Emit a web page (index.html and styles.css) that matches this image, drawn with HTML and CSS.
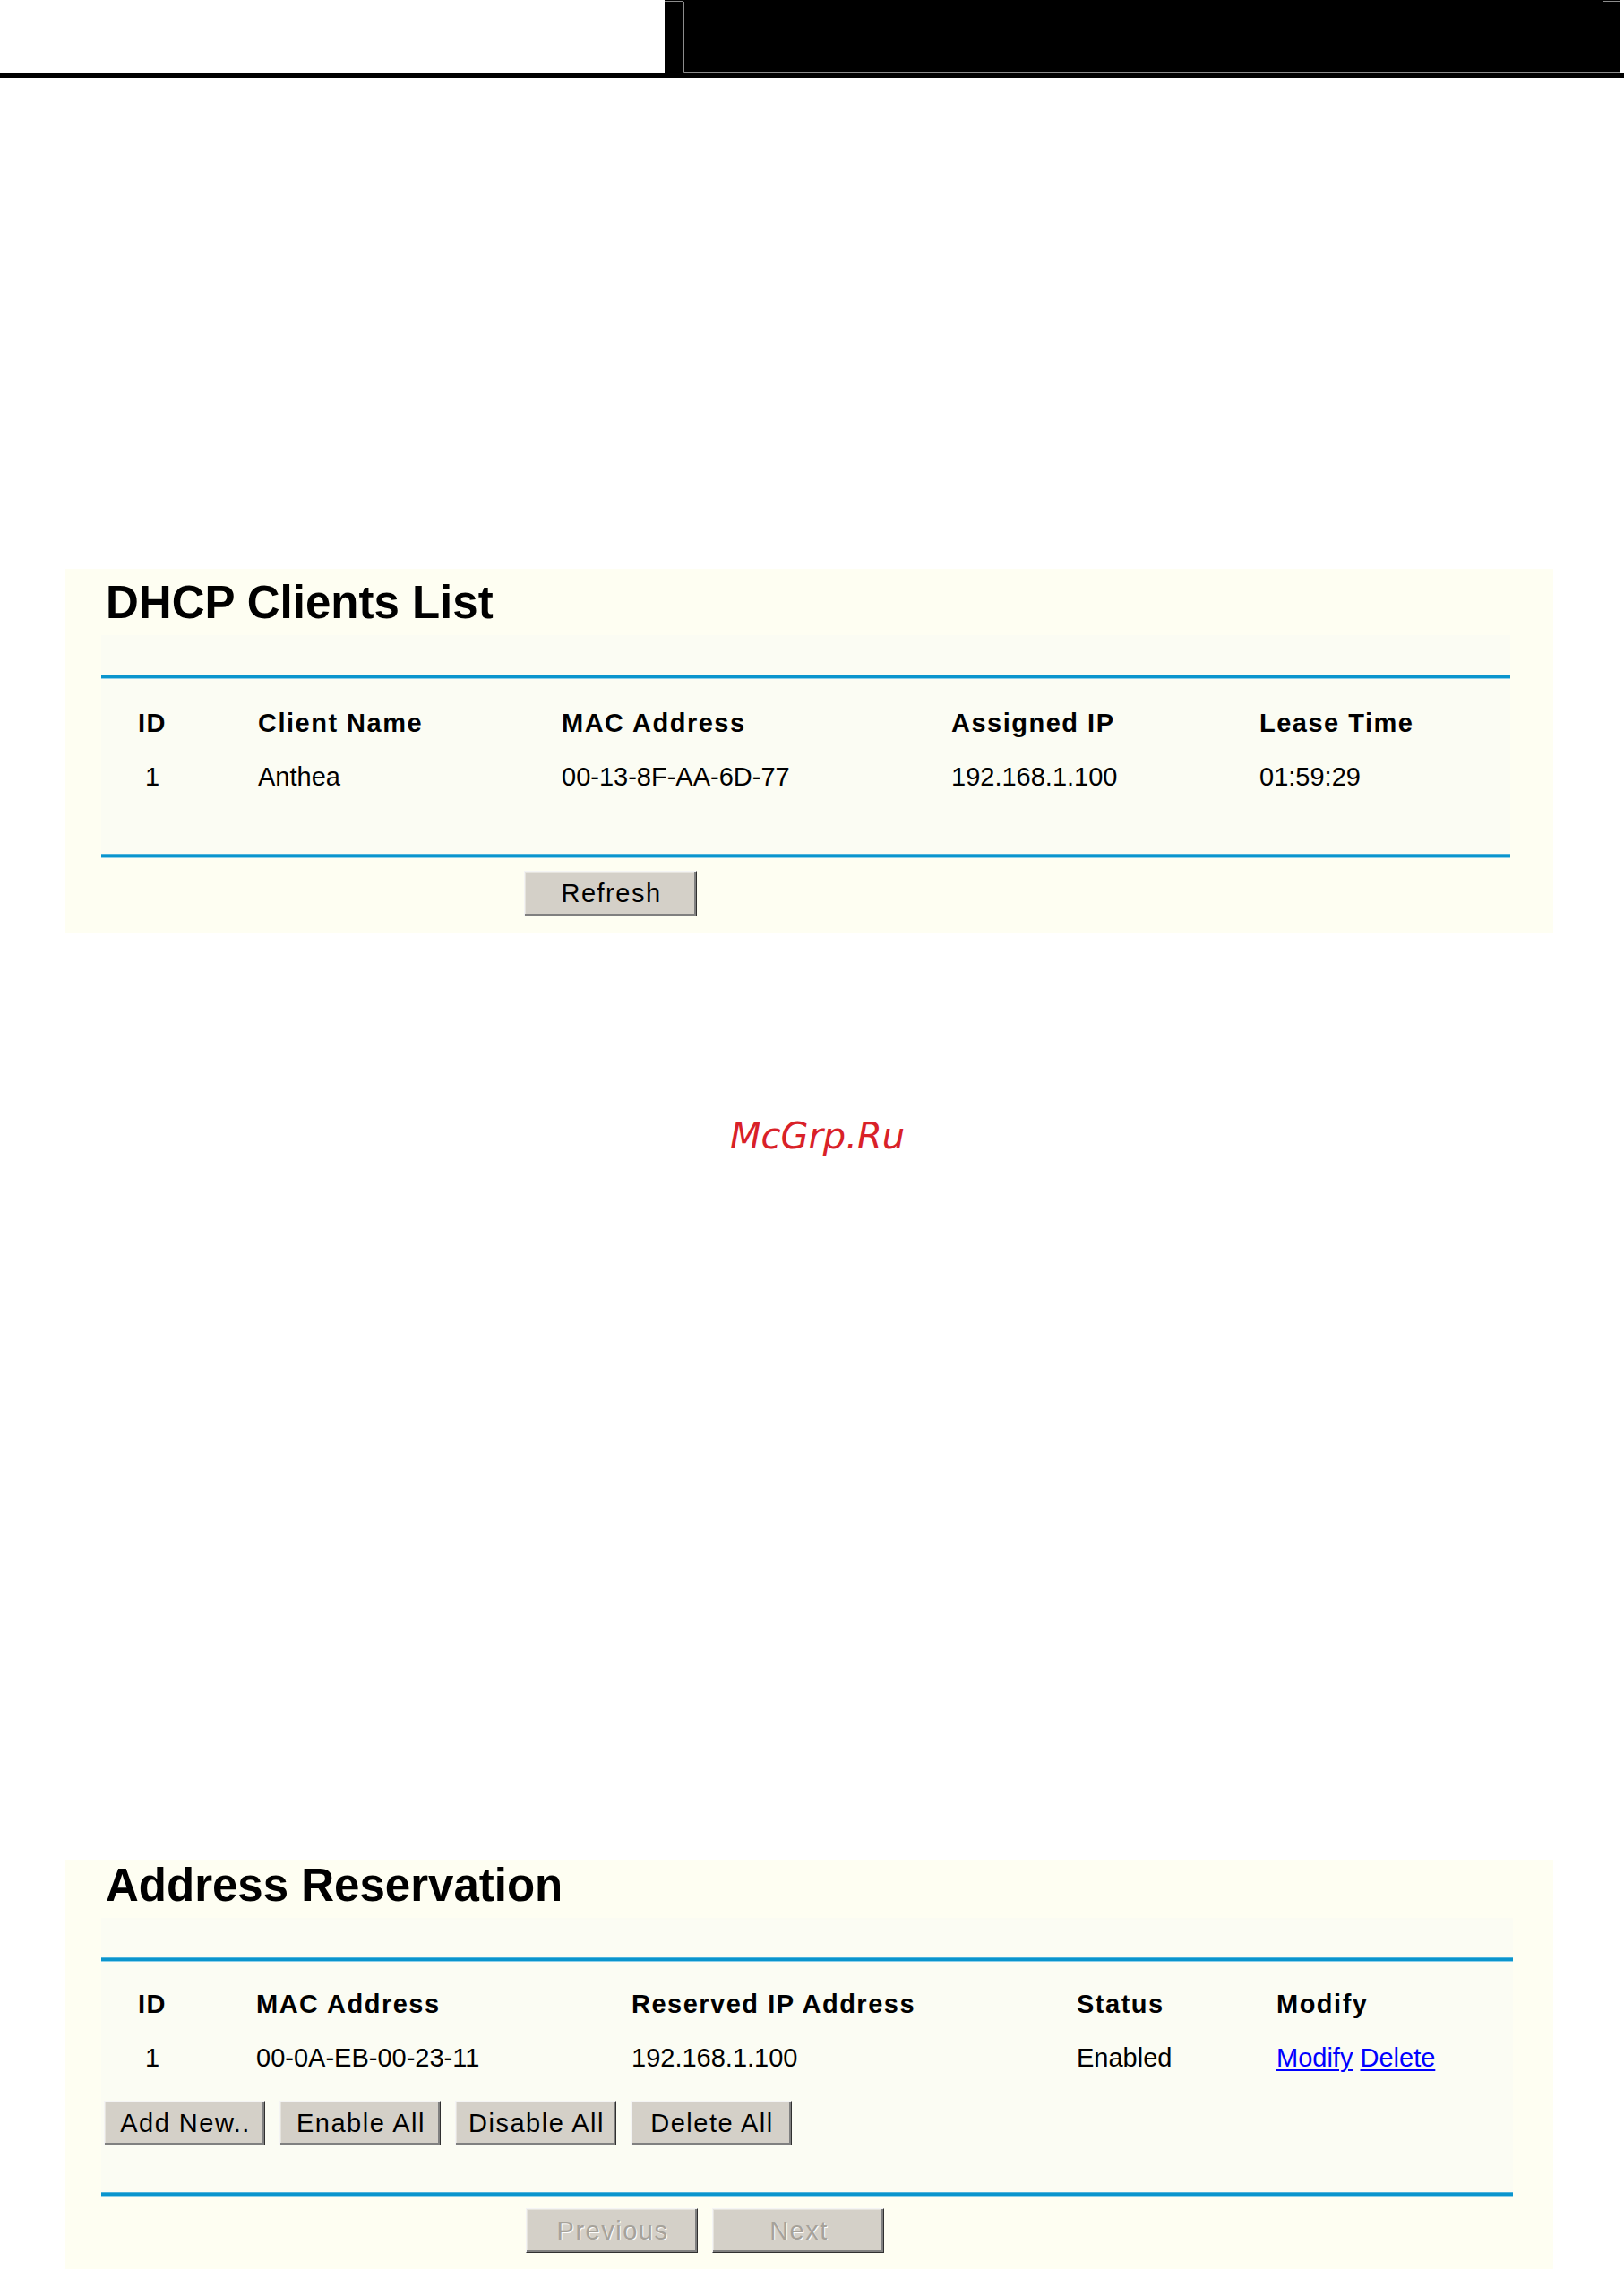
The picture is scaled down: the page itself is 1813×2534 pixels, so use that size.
FILE: index.html
```html
<!DOCTYPE html>
<html lang="en">
<head>
<meta charset="utf-8">
<title>DHCP Clients List / Address Reservation</title>
<link rel="stylesheet" href="styles.css">
</head>
<body>
<header class="banner">
  <div class="banner-blank"></div>
  <div class="banner-box">
    <svg class="banner-frame" width="1067" height="81" viewBox="0 0 1067 81" aria-hidden="true">
      <path d="M0 1.5H21M21.5 2V80.5H1048M1048 1.5H1067M1048 80.5H1067" stroke="#8c8c8c" stroke-width="1" fill="none"/>
    </svg>
  </div>
</header>
<div class="banner-rule"></div>

<section class="panel panel-dhcp">
  <h1 class="panel-title">DHCP Clients List</h1>
  <div class="panel-body">
    <div class="blue-rule"></div>
    <div class="grid grid-dhcp">
      <div class="cell head"><span class="id">ID</span></div>
      <div class="cell head">Client Name</div>
      <div class="cell head">MAC Address</div>
      <div class="cell head">Assigned IP</div>
      <div class="cell head">Lease Time</div>
      <div class="cell"><span class="id">1</span></div>
      <div class="cell">Anthea</div>
      <div class="cell">00-13-8F-AA-6D-77</div>
      <div class="cell">192.168.1.100</div>
      <div class="cell">01:59:29</div>
    </div>
    <div class="blue-rule"></div>
  </div>
  <div class="panel-foot">
    <button class="btn btn-wide" type="button">Refresh</button>
  </div>
</section>

<div class="watermark">McGrp.Ru</div>

<section class="panel panel-res">
  <h1 class="panel-title">Address Reservation</h1>
  <div class="panel-body panel-body-res">
    <div class="blue-rule"></div>
    <div class="grid grid-res">
      <div class="cell head"><span class="id">ID</span></div>
      <div class="cell head">MAC Address</div>
      <div class="cell head">Reserved IP Address</div>
      <div class="cell head">Status</div>
      <div class="cell head">Modify</div>
      <div class="cell"><span class="id">1</span></div>
      <div class="cell">00-0A-EB-00-23-11</div>
      <div class="cell">192.168.1.100</div>
      <div class="cell">Enabled</div>
      <div class="cell"><a class="link" href="#">Modify</a> <a class="link" href="#">Delete</a></div>
    </div>
    <div class="actions">
      <button class="btn btn-action" type="button">Add New..</button>
      <button class="btn btn-action" type="button">Enable All</button>
      <button class="btn btn-action" type="button">Disable All</button>
      <button class="btn btn-action" type="button">Delete All</button>
    </div>
    <div class="blue-rule"></div>
  </div>
  <div class="panel-foot panel-foot-res">
    <button class="btn btn-wide" type="button" disabled>Previous</button>
    <button class="btn btn-wide" type="button" disabled>Next</button>
  </div>
</section>
</body>
</html>
```

FILE: styles.css
```css
html, body {
  margin: 0;
  padding: 0;
  background: #ffffff;
}

body {
  font-family: "Liberation Sans", Arial, sans-serif;
  color: #000000;
  width: 1813px;
  overflow: hidden;
}

/* top banner */
.banner {
  display: flex;
  height: 81px;
}

.banner-blank {
  width: 742px;
  flex: none;
}

.banner-box {
  width: 1067px;
  flex: none;
  background: #000000;
}

.banner-frame {
  display: block;
}

.banner-rule {
  height: 6px;
  background: #000000;
}

/* panels */
.panel {
  width: 1661px;
  margin-left: 73px;
  background: #fefef2;
  box-sizing: border-box;
}

.panel-dhcp {
  margin-top: 548px;
  padding: 12px 0 19px;
}

.panel-res {
  margin-top: 784px;
  padding: 3px 0 18px;
}

.panel-title {
  margin: 0 0 0 45px;
  font-size: 51px;
  line-height: 51px;
  font-weight: bold;
}

.panel-body {
  margin: 11px 48px 0 40px;
  padding-top: 44px;
  background: #fbfcf3;
}

.panel-body-res {
  margin-right: 45px;
}

.blue-rule {
  height: 5px;
  background: linear-gradient(to bottom, #4fb3dc 0, #4fb3dc 1px, #0a95cd 1px, #0a95cd 4px, #8ccfea 4px, #8ccfea 5px);
}

/* tables */
.grid {
  display: grid;
  grid-template-rows: 40px 40px;
  row-gap: 20px;
  padding-top: 29px;
}

.grid-dhcp {
  grid-template-columns: 175px 339px 435px 344px 1fr;
  margin-bottom: 66px;
}

.grid-res {
  grid-template-columns: 173px 419px 497px 223px 1fr;
  padding-top: 27px;
}

.cell {
  font-size: 29px;
  line-height: 40px;
  white-space: nowrap;
}

.cell.head {
  font-weight: bold;
  letter-spacing: 1.5px;
}

.id {
  display: inline-block;
  width: 114px;
  text-align: center;
}

.link {
  color: #0000ff;
  text-decoration: underline;
  text-decoration-thickness: 2px;
  text-underline-offset: 3px;
}

/* buttons */
.actions {
  display: flex;
  gap: 16px;
  margin: 28px 0 52px 3px;
}

.panel-foot {
  display: flex;
  gap: 16px;
  padding: 14px 0 0 512px;
}

.panel-foot-res {
  padding-top: 13px;
  padding-left: 514px;
}

.btn {
  height: 51px;
  margin: 0;
  padding: 0 0 0 2px;
  box-sizing: border-box;
  background: #d4d0c8;
  border: 1px solid;
  border-color: #f4f4f4 #303030 #303030 #f4f4f4;
  box-shadow: inset -2px -2px 0 #808080, inset 1px 1px 0 #e6e4de;
  font-family: "Liberation Sans", Arial, sans-serif;
  font-size: 29px;
  letter-spacing: 1.5px;
  color: #000000;
  text-align: center;
}

.btn-wide {
  width: 193px;
}

.btn-action {
  width: 180px;
  height: 50px;
}

.panel-foot-res .btn {
  height: 50px;
  width: 192px;
}

.btn:disabled {
  color: #a6a29a;
  text-shadow: 1px 1px 0 #ffffff;
}

/* watermark */
.watermark {
  margin-top: 202px;
  padding-left: 12px;
  text-align: center;
  font-family: "DejaVu Sans", "Liberation Sans", sans-serif;
  font-style: italic;
  font-size: 40px;
  line-height: 48px;
  color: #d92128;
}
```
